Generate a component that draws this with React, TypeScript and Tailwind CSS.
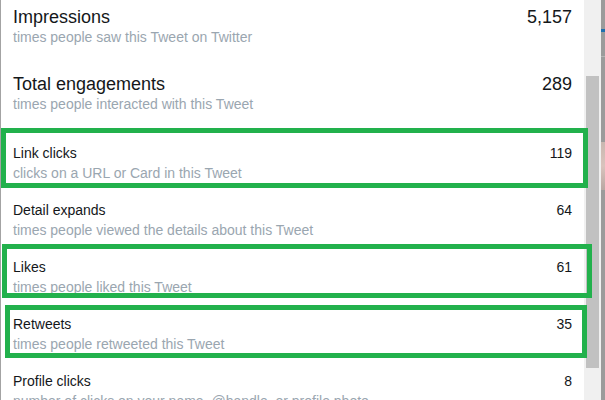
const big = [
  { title: 'Impressions', sub: 'times people saw this Tweet on Twitter', value: '5,157' },
  { title: 'Total engagements', sub: 'times people interacted with this Tweet', value: '289' },
];

const small = [
  { title: 'Link clicks', sub: 'clicks on a URL or Card in this Tweet', value: '119' },
  { title: 'Detail expands', sub: 'times people viewed the details about this Tweet', value: '64' },
  { title: 'Likes', sub: 'times people liked this Tweet', value: '61' },
  { title: 'Retweets', sub: 'times people retweeted this Tweet', value: '35' },
  { title: 'Profile clicks', sub: 'number of clicks on your name, @handle, or profile photo', value: '8' },
];

const App = () => {
  return (
    <div
      className="relative flex h-[400px] w-[605px] overflow-hidden bg-white"
      style={{ fontFamily: '"Liberation Sans", Arial, sans-serif' }}
    >
      {/* left edge of the modal */}
      <div className="w-px shrink-0 bg-[#a3a3a3]" />

      <div className="flex w-[583px] shrink-0 flex-col pl-[12px] pr-[12px] pt-[7px]">
        {big.map((row, i) => (
          <div key={row.title} className={i === 0 ? 'flex justify-between' : 'mt-[27px] flex justify-between'}>
            <div>
              <div className="text-[18px] leading-[20px] text-[#14171a]">{row.title}</div>
              <div className="mt-px text-[14px] leading-[19px] text-[#9aa6b0]">{row.sub}</div>
            </div>
            <div className="text-[18px] leading-[20px] text-[#14171a]">{row.value}</div>
          </div>
        ))}

        <div className="mt-[20px] flex flex-col">
          {small.map((row) => (
            <div key={row.title} className="flex h-[57px] shrink-0 justify-between pt-[10px]">
              <div>
                <div className="text-[14px] leading-[19px] text-[#14171a]">{row.title}</div>
                <div className="mt-px whitespace-nowrap text-[14px] leading-[19px] text-[#9aa6b0]">{row.sub}</div>
              </div>
              <div className="text-[14px] leading-[19px] text-[#14171a]">{row.value}</div>
            </div>
          ))}
        </div>
      </div>

      {/* scrollbar */}
      <div className="relative w-[17px] shrink-0 bg-[#f0f0f0]">
        <div className="absolute left-[2px] top-[76px] h-[292px] w-[13px] bg-[#c1c1c1]" />
      </div>

      {/* page behind the modal */}
      <div className="relative flex-1 bg-[#9b9b9b]">
        <div className="absolute left-0 right-0 top-[29px] h-[3px] bg-[#1f6fae]" />
        <div className="absolute left-0 right-0 top-[56px] h-px bg-[#b5b5b5]" />
        <div className="absolute left-0 right-0 top-[142px] h-[48px] bg-gradient-to-b from-[#c9b7b0] via-[#d9c3bd] to-[#b8a7a2]" />
      </div>

      {/* green highlight boxes */}
      <div className="pointer-events-none absolute left-[1px] top-[128px] h-[60px] w-[587px] border-[5px] border-[#22b14c]" />
      <div className="pointer-events-none absolute left-[2px] top-[244px] h-[54px] w-[590px] border-[5px] border-[#22b14c]" />
      <div className="pointer-events-none absolute left-[5px] top-[305px] h-[53px] w-[582px] border-[5px] border-[#22b14c]" />
    </div>
  );
};

export default App;
